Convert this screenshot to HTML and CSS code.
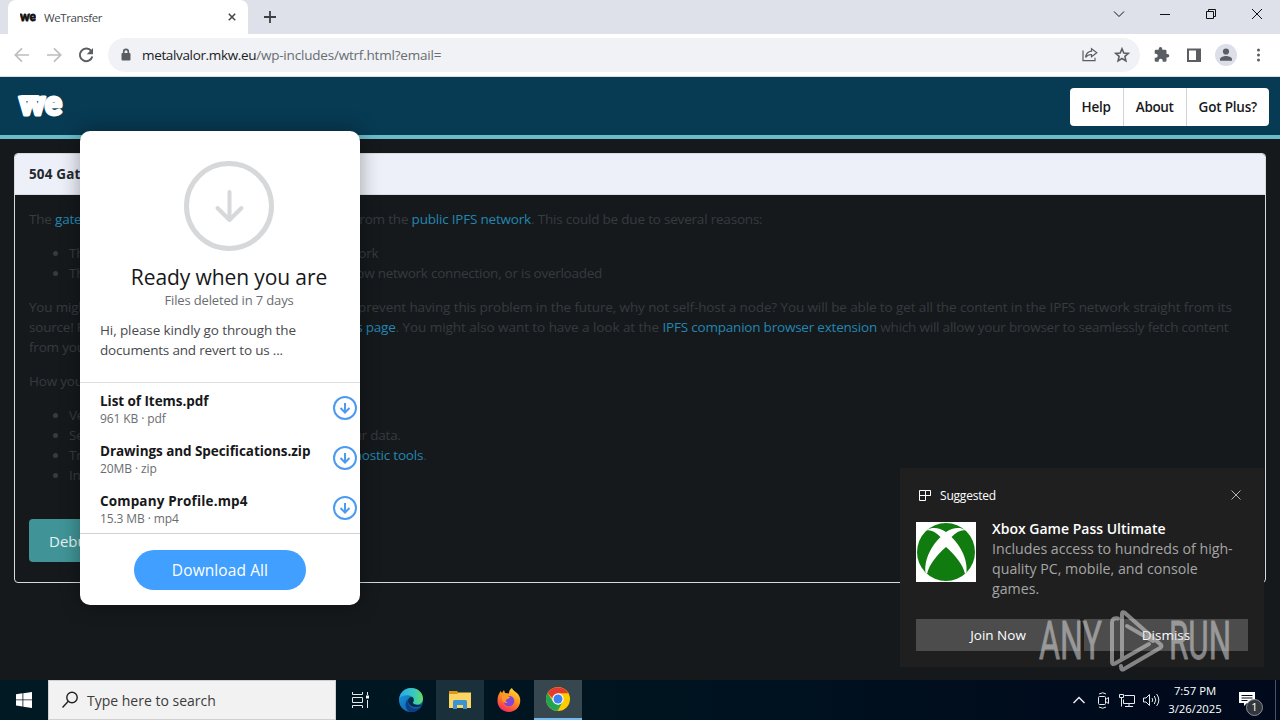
FILE: index.html
```
<!DOCTYPE html>
<html lang="en">
<head>
    <meta charset="UTF-8">
    <meta name="viewport" content="width=device-width, initial-scale=1.0">
    <title>WeTransfer</title>
    <link rel="stylesheet" href="styles.css">
</head>
<body>
    <!-- Browser tabs -->
    <div class="tabbar">
        <div class="tab">
            <svg class="favicon" width="16" height="20" viewBox="0 0 16 20"><text x="0" y="14" textLength="16" lengthAdjust="spacingAndGlyphs">we</text></svg>
            <span class="tab-title">WeTransfer</span>
            <svg class="tab-close" width="16" height="16" viewBox="0 0 16 16"><path d="M4.800 4.800l6.400 6.400M11.200 4.800l-6.400 6.400"/></svg>
        </div>
        <svg class="new-tab" width="16" height="16" viewBox="0 0 16 16"><path d="M8 2v12M2 8h12"/></svg>
        <div class="window-controls">
            <svg width="46" height="34" viewBox="0 0 46 34"><path d="M18 11.500l5 5 5-5"/></svg>
            <svg width="46" height="34" viewBox="0 0 46 34"><path d="M18 14.500h10"/></svg>
            <svg width="46" height="34" viewBox="0 0 46 34"><path d="M18.500 11.500h7v7h-7zM20.500 11.500v-2h7v7h-2"/></svg>
            <svg width="46" height="34" viewBox="0 0 46 34"><path d="M18 9l10 10M28 9l-10 10"/></svg>
        </div>
    </div>

    <div class="toolbar">
        <svg class="tool off" width="32" height="32" viewBox="0 0 32 32"><path d="M23 16H9.500M16 9.300L9.300 16l6.700 6.700"/></svg>
        <svg class="tool off" width="32" height="32" viewBox="0 0 32 32"><path d="M9 16h13.500M16 9.300l6.700 6.700-6.700 6.700"/></svg>
        <svg class="tool" width="32" height="32" viewBox="0 0 32 32"><path d="M21.300 12.200a6.300 6.300 0 1 0 1 5.300"/><path class="fill" d="M23 9v6.300h-6.300z"/></svg>
        <div class="omnibox">
            <svg width="12" height="14" viewBox="0 0 12 14"><rect class="fill" x="1.500" y="5" width="9" height="7.500" rx="1"/><path d="M3.700 5.500V3.700a2.300 2.300 0 0 1 4.600 0v1.800"/></svg>
            <div class="url"><span class="host">metalvalor.mkw.eu</span><span class="path">/wp-includes/wtrf.html?email=</span></div>
            <svg class="omni-icon thin" width="32" height="32" viewBox="0 0 32 32"><path d="M9 11.500v10.200h12v-3M17.500 9.800l5.300 4-5.300 4v-2.300c-3 0-4.600 1-5.900 2.900.4-3.700 2.400-5.900 5.900-6.300z"/></svg>
            <svg class="omni-icon" width="32" height="32" viewBox="0 0 32 32"><path d="M16 9.800l1.800 4.200 4.500.4-3.400 3 1 4.500-3.900-2.400-3.900 2.400 1-4.500-3.400-3 4.500-.4z"/></svg>
        </div>
        <svg class="tool" width="32" height="32" viewBox="0 0 32 32"><path class="fill" d="M21.500 15h-1v-3a1.300 1.300 0 0 0-1.300-1.300h-2.900V9.900a1.800 1.800 0 0 0-3.600 0v.8H10A1.300 1.300 0 0 0 8.700 12v2.700h1a2 2 0 0 1 0 4h-1v2.800a1.300 1.300 0 0 0 1.300 1.300h2.700v-1a2 2 0 0 1 4 0v1h2.500a1.300 1.300 0 0 0 1.300-1.300v-2.900h1a1.800 1.800 0 0 0 0-3.600z"/></svg>
        <svg class="tool" width="32" height="32" viewBox="0 0 32 32"><rect x="10" y="10.500" width="12" height="11.500"/><path class="fill" d="M18 10h5v12.500h-5z"/></svg>
        <svg class="tool" width="32" height="32" viewBox="0 0 32 32"><circle class="avatar" cx="16" cy="16" r="11"/><circle class="fill" cx="16" cy="12.500" r="3.100"/><path class="fill" d="M10 21.800v-1.600c0-2.200 4-3.200 6-3.200s6 1 6 3.200v1.600z"/></svg>
        <svg class="tool" width="32" height="32" viewBox="0 0 32 32"><circle class="fill" cx="16.500" cy="11" r="1.500"/><circle class="fill" cx="16.500" cy="16" r="1.500"/><circle class="fill" cx="16.500" cy="21" r="1.500"/></svg>
    </div>

    <!-- Web page -->
    <div class="page">
        <header class="site-header">
            <svg class="logo" width="50" height="50" viewBox="0 0 50 50"><text x="3" y="33.500" textLength="43" lengthAdjust="spacingAndGlyphs">we</text><rect x="4" y="14" width="20" height="6" rx="2"/></svg>
            <nav>
                <a href="#">Help</a>
                <a class="tight" href="#">About</a>
                <a href="#">Got Plus?</a>
            </nav>
        </header>

        <div class="card">
            <h2>504 Gateway</h2>
            <div class="card-body">
                <p><span class="lead lead-a">The <a href="#">gateway</a></span><span class="row-a">from the <a href="#">public IPFS network</a>. This could be due to several reasons:</span></p>
                <ul>
                    <li><span class="lead lead-b">There</span>network</li>
                    <li><span class="lead lead-c">The</span><span class="row-c">slow network connection, or is overloaded</span></li>
                </ul>
                <p>
                    <span class="lead lead-d">You might</span><span class="row-d">prevent having this problem in the future, why not self-host a node? You will be able to get all the content in the IPFS network straight from its</span><br>
                    <span class="lead lead-e">source! Find</span><span class="row-e"><a href="#">docs page</a><span class="wide">. You might also want to have a look at the </span><a href="#">IPFS companion browser extension</a> which will allow your browser to seamlessly fetch content</span><br>
                    from your
                </p>
                <p>How you</p>
                <ul>
                    <li>Verify</li>
                    <li><span class="lead lead-f">Self</span>your data.</li>
                    <li><span class="lead lead-g">Try</span><a href="#">diagnostic tools</a>.</li>
                    <li>Inspect</li>
                </ul>
                <button class="debug">Debug</button>
            </div>
        </div>

        <div class="transfer">
            <div class="transfer-top">
                <svg width="90" height="90" viewBox="0 0 90 90"><circle cx="45" cy="45" r="42.500"/><path d="M45.500 31v28M33.500 47l12 12 12-12"/></svg>
                <h1>Ready when you are</h1>
                <small>Files deleted in 7 days</small>
            </div>
            <p class="message">Hi, please kindly go through the<br><span>documents and revert to us ...</span></p>
            <div class="files">
                <div class="file">
                    <div><b>List of Items.pdf</b><span>961 KB · pdf</span></div>
                    <svg width="24" height="24" viewBox="0 0 24 24"><circle cx="12" cy="12" r="11"/><path d="M12 7v9.500M7.500 12l4.500 4.500 4.500-4.500"/></svg>
                </div>
                <div class="file">
                    <div><b>Drawings and Specifications.zip</b><span>20MB · zip</span></div>
                    <svg width="24" height="24" viewBox="0 0 24 24"><circle cx="12" cy="12" r="11"/><path d="M12 7v9.500M7.500 12l4.500 4.500 4.500-4.500"/></svg>
                </div>
                <div class="file">
                    <div><b class="spaced">Company Profile.mp4</b><span>15.3 MB · mp4</span></div>
                    <svg width="24" height="24" viewBox="0 0 24 24"><circle cx="12" cy="12" r="11"/><path d="M12 7v9.500M7.500 12l4.500 4.500 4.500-4.500"/></svg>
                </div>
            </div>
            <button class="download">Download All</button>
        </div>
    </div>

    <!-- Notification -->
    <div class="toast">
        <div class="toast-head">
            <svg width="12" height="12" viewBox="0 0 12 12"><path d="M.5 1.500h6v10h-6zM.5 6.500h11M6.500 6.500h5v-5h-5"/></svg>
            <span>Suggested</span>
            <svg class="toast-close" width="10" height="10" viewBox="0 0 10 10"><path d="M.5.5l9 9M9.500.5l-9 9"/></svg>
        </div>
        <div class="toast-main">
            <svg width="60" height="60" viewBox="0 0 60 60">
                <rect width="60" height="60" fill="#fff"/>
                <circle cx="30" cy="30" r="29" fill="#107c10"/>
                <path fill="#fff" d="M12 7.500C18 4.500 24 6.500 30 10c6-3.500 12-5.500 18-2.500l1 1c-4-.8-9 2-13.500 6.500C43 22 52 36 50.500 50.500L49 52c-2-10-11-20-19-27-8 7-17 17-19 27l-1.500-1.500C8 36 17 22 24.500 15 20 10.500 15 7.700 11 8.500z"/>
            </svg>
            <div class="toast-text"><b>Xbox Game Pass Ultimate</b><br>Includes access to hundreds of high-<br>quality PC, mobile, and console<br>games.</div>
        </div>
        <div class="toast-actions">
            <button>Join Now</button>
            <button>Dismiss</button>
        </div>
    </div>

    <svg class="watermark" width="210" height="70" viewBox="0 0 210 70">
        <text x="3" y="53" textLength="63" lengthAdjust="spacingAndGlyphs">ANY</text>
        <text x="133" y="53" textLength="62" lengthAdjust="spacingAndGlyphs">RUN</text>
        <path d="M86 52V8q0-3 3-1l35 31q3 2 0 4L88 63q-3 2-3-3M82 12.500q-6-1-6 4V56q0 3 3 1.500L113 38M91 20l26 15"/>
    </svg>

    <!-- Taskbar -->
    <div class="taskbar">
        <svg class="start" width="48" height="40" viewBox="0 0 48 40"><path d="M16 14.300l6.500-1v6.200H16zM23.300 13.200L32 12v7.500h-8.700zM16 20.300h6.500v6.300l-6.500-1zM23.300 20.300H32V28l-8.700-1.300z"/></svg>
        <div class="search">
            <svg width="18" height="18" viewBox="0 0 18 18"><circle cx="11" cy="6.500" r="5.200"/><path d="M7.300 10.200L1.500 16.500"/></svg>
            <span>Type here to search</span>
        </div>
        <svg class="taskview" width="48" height="40" viewBox="0 0 48 40"><path d="M16.500 12v2.500h10V12M16.500 28v-2.500h10V28M16.500 17.500h10v5h-10zM31.500 12v3M31.500 20v8"/><path class="dot" d="M30 15.500h3v3h-3z"/></svg>
        <div class="app">
            <svg width="24" height="24" viewBox="0 0 24 24">
                <defs>
                    <linearGradient id="sea" x1="0" x2="1"><stop offset="0" stop-color="#2aa8e8"/><stop offset=".6" stop-color="#38c8c0"/><stop offset="1" stop-color="#63dc62"/></linearGradient>
                    <linearGradient id="deep" x1="0" y1="0" x2="1" y2="1"><stop offset="0" stop-color="#1b9de2"/><stop offset="1" stop-color="#0c4f9c"/></linearGradient>
                </defs>
                <circle cx="12" cy="12" r="12" fill="url(#deep)"/>
                <path fill="url(#sea)" d="M.3 10.500C1.500 4 6.500 0 12 0c7 0 12 5 12 10.500 0 4-3 6-6 6-3 0-4.500-1.300-4-2.200 1.500-1.800 1-5.600-3-6.600C7 6.700 2 7.500.3 10.500z"/>
                <path fill="#0b3f86" d="M9 11c-1.500 5 3 9.500 8 9.500 2 0 3.500-.8 5-1.800-2 3.500-6.500 5.600-10.500 5.200C6 22.500 5 14.500 9 11z"/>
                <path fill="#001820" d="M14 14.300c1.500-1.800.7-4-.5-5.300-3 0-4.500 1.500-4.500 4 0 3.500 4 6.500 8.500 6 2.500-.2 4.500-1.200 5.300-2.500C18 18 13.500 16.500 14 14.300z" opacity=".75"/>
            </svg>
        </div>
        <div class="app open">
            <svg width="24" height="24" viewBox="0 0 24 24"><path fill="#d99a1c" d="M1 3h8l2 2h12v3H1z"/><path fill="#fcd462" d="M1 6h8l2-1.500h12V20H1z"/><path fill="#3a93d4" d="M5 13.500q0-1.500 1.500-1.500h11q1.500 0 1.500 1.500V21h-4v-4H9v4H5z"/></svg>
        </div>
        <div class="app">
            <svg width="24" height="24" viewBox="0 0 24 24">
                <defs><linearGradient id="fire" x1=".8" y1="0" x2=".3" y2="1"><stop offset="0" stop-color="#ffe03a"/><stop offset=".5" stop-color="#ff8a1f"/><stop offset="1" stop-color="#f5255f"/></linearGradient></defs>
                <path fill="url(#fire)" d="M2 6l1.500-3L5 5l2-3 1 3 4 .5C12 3 13 1 15 0c.5 3 6.500 4 8 10 1.500 8-4 14-11 14S.2 18.500.5 12.500C.6 9.500 1 7.500 2 6z"/>
                <circle cx="12" cy="13" r="5.300" fill="#8345d8"/>
                <path fill="#ff9a24" d="M5 8c3-1.500 6-1 8 1.500-1 1.500-3 1-4 2.500-.7 1.300.5 2.500 2 2.500-3 1.500-7-1-6-6.500z"/>
            </svg>
        </div>
        <div class="app open active">
            <svg width="24" height="24" viewBox="0 0 24 24">
                <circle cx="12" cy="12" r="12" fill="#fc0"/>
                <path fill="#e33b2e" d="M12 12H7.200L1.600 6A12 12 0 0 1 22.400 6.300H12z"/>
                <path fill="#23a455" d="M1.600 6l5.600 8.800L12 17.500l-.3 6.500A12 12 0 0 1 1.600 6z"/>
                <path fill="#23a455" d="M12 18l4.700-3.500L11.700 24z"/>
                <circle cx="12" cy="12" r="5.700" fill="#fff"/>
                <circle cx="12" cy="12" r="4.500" fill="#3c82f0"/>
            </svg>
        </div>
        <div class="tray">
            <svg width="24" height="24" viewBox="0 0 24 24"><path class="bold" d="M6.500 15l5.500-5.500 5.500 5.500"/></svg>
            <svg width="24" height="24" viewBox="0 0 24 24"><rect x="7.500" y="8.500" width="7" height="8" rx="1"/><path d="M14.500 11.500l3-2v6l-3-2M8 6q4-2.500 7 0M8 19q4 2.500 7 0"/></svg>
            <svg width="24" height="24" viewBox="0 0 24 24"><path d="M9.500 7.500h10v8h-11v-4M14 15.500v3M10 18.500h8M4.500 6.500h4v3h-4zM6.500 9.500v9"/></svg>
            <svg width="24" height="24" viewBox="0 0 24 24"><path d="M4.500 10h2.500l3.500-3.500v11L7 14H4.500zM13 10q1.500 2 0 4M15.300 8q3 4 0 8M17.600 6q4.500 6 0 12"/></svg>
            <div class="clock">7:57 PM<br>3/26/2025</div>
            <div class="notify">
                <svg width="18" height="18" viewBox="0 0 18 18"><path class="bubble" d="M1 1h16v11H9l-3 3v-3H1z"/><path class="lines" d="M3.500 4.500h11M3.500 7h11M3.500 9.500h6"/></svg>
                <span class="count">1</span>
            </div>
            <div class="peek"></div>
        </div>
    </div>
</body>
</html>
```
FILE: styles.css
```
* {
    box-sizing: border-box;
}
body {
    font-family: "Open Sans", "Noto Sans", sans-serif;
    margin: 0;
    width: 1280px;
    height: 720px;
    overflow: hidden;
    position: relative;
    display: flex;
    flex-direction: column;
    background-color: #15191c;
}
svg {
    display: block;
    flex: none;
    fill: none;
}
button {
    font-family: inherit;
    border: none;
    padding: 0;
}
a {
    text-decoration: none;
}

/* Browser */
.tabbar {
    display: flex;
    align-items: center;
    height: 34px;
    padding-left: 8px;
    background-color: #dee1e9;
}
.tab {
    display: flex;
    align-items: center;
    width: 240px;
    height: 34px;
    padding: 0 8px 0 12px;
    background-color: #fff;
    border-radius: 8px 8px 0 0;
}
.favicon text {
    font-family: Lato, sans-serif;
    font-size: 13px;
    font-weight: 900;
    fill: #111;
    stroke: #111;
    stroke-width: 0.8;
}
.tab-title {
    flex: 1;
    margin-left: 8px;
    font-size: 11.5px;
    letter-spacing: -0.4px;
    color: #45494d;
}
.tab-close {
    stroke: #45494d;
    stroke-width: 1.6;
}
.new-tab {
    margin-left: 14px;
    stroke: #3c4043;
    stroke-width: 1.8;
}
.window-controls {
    display: flex;
    margin-left: auto;
    stroke: #111;
}
.toolbar {
    display: flex;
    align-items: center;
    height: 43px;
    padding: 0 6px 1px;
    background-color: #fff;
    border-bottom: 1px solid #d5dde2;
}
.tool {
    stroke: #5a5e63;
    stroke-width: 2;
}
.off {
    stroke: #bbbdc0;
    stroke-width: 1.7;
}
.fill {
    fill: #5a5e63;
    stroke: none;
}
.avatar {
    fill: #dcdfea;
    stroke: none;
}
.omnibox {
    display: flex;
    align-items: center;
    flex: 1;
    height: 34px;
    margin: 0 6px;
    padding: 0 2px 0 12px;
    border-radius: 17px;
    background-color: #f0f2f5;
    stroke: #5a5e63;
    stroke-width: 1.6;
}
.url {
    flex: 1;
    margin-left: 10px;
    font-size: 13.5px;
}
.host {
    color: #202124;
    letter-spacing: -0.35px;
}
.path {
    color: #686c71;
    letter-spacing: -0.2px;
}
.thin {
    stroke-width: 1.2;
}

/* Page */
.page {
    position: relative;
    flex: 1;
    color: #363b3f;
    font-size: 13.5px;
    line-height: 20px;
    letter-spacing: -0.2px;
}
.site-header {
    display: flex;
    align-items: center;
    justify-content: space-between;
    height: 62px;
    padding: 0 11px 0 16px;
    background-color: #073a53;
    border-bottom: 4px solid #6abbc9;
}
.logo {
    fill: #fff;
}
.logo text {
    font-family: Lato, sans-serif;
    font-size: 35px;
    font-weight: 900;
    stroke: #fff;
    stroke-width: 3;
    stroke-linejoin: round;
}
nav {
    display: flex;
    margin-top: 2px;
    border-radius: 4px;
    background-color: #fff;
}
nav a {
    padding: 9px 12px;
    font-weight: 600;
    color: #17181a;
}
nav a + a {
    border-left: 1px solid #cfd4d8;
}
nav .tight {
    letter-spacing: -0.35px;
}
.card {
    margin: 14px 14px 0;
    height: 430px;
    border: 1px solid #d5dcdd;
    border-radius: 4px;
    overflow: hidden;
}
.card h2 {
    margin: 0;
    height: 41px;
    padding: 10px 14px;
    font-size: 13.5px;
    line-height: 20px;
    font-weight: 700;
    letter-spacing: 0.15px;
    color: #24292e;
    background-color: #edf0f9;
    border-bottom: 1px solid #d8dee3;
}
.card-body {
    padding: 14px;
    white-space: nowrap;
}
.card-body p, .card-body ul {
    margin: 0 0 14px;
}
.card-body ul {
    padding-left: 40px;
}
.card-body a {
    color: #2486b1;
}
/* left part of each line, of fixed width */
.lead {
    display: inline-block;
}
.lead-a { width: 326px; }
.lead-b { width: 259px; }
.lead-c { width: 278px; }
.lead-d { width: 329px; }
.lead-e { width: 305px; }
.lead-f { width: 270px; }
.lead-g { width: 259px; }
.row-c {
    letter-spacing: -0.26px;
}
.row-d {
    letter-spacing: -0.11px;
}
.row-e {
    letter-spacing: -0.21px;
}
.wide {
    letter-spacing: -0.05px;
}
.debug {
    display: block;
    margin-top: 34px;
    width: 140px;
    height: 43px;
    padding-left: 20px;
    text-align: left;
    font-size: 15px;
    color: #e4f3f3;
    background-color: #409497;
    border-radius: 4px;
}

/* Transfer panel */
.transfer {
    position: absolute;
    left: 80px;
    top: 54px;
    width: 280px;
    height: 474px;
    padding-top: 30px;
    border-radius: 10px;
    background-color: #fff;
    box-shadow: 0 0 20px rgba(0, 0, 0, 0.35);
    letter-spacing: 0;
}
.transfer-top {
    display: flex;
    flex-direction: column;
    align-items: center;
    padding-left: 18px;
}
.transfer-top svg {
    stroke: #d6d8da;
    stroke-width: 5;
}
.transfer-top path {
    stroke-width: 4;
    stroke-linecap: round;
    stroke-linejoin: round;
}
h1 {
    margin: 11px 0 0;
    font-size: 21px;
    line-height: 30px;
    font-weight: 400;
    letter-spacing: -0.1px;
    color: #17181a;
}
small {
    font-size: 13px;
    line-height: 16px;
    letter-spacing: -0.15px;
    color: #6a6d70;
}
.message {
    margin: 12px 20px 22px;
    letter-spacing: -0.1px;
    color: #484a4d;
}
.message span {
    letter-spacing: -0.18px;
}
.files {
    border-top: 1px solid #dcdedf;
    border-bottom: 1px solid #d0d2d3;
}
.file {
    display: flex;
    justify-content: space-between;
    height: 50px;
    padding: 9px 3px 0 20px;
}
.file b {
    display: block;
    line-height: 18px;
    letter-spacing: -0.06px;
    color: #17181a;
}
.file .spaced {
    letter-spacing: 0.15px;
}
.file span {
    display: block;
    font-size: 12px;
    line-height: 17px;
    letter-spacing: -0.1px;
    color: #6a6d70;
}
.file svg {
    margin-top: 4px;
    stroke: #4c9bf0;
    stroke-width: 2;
}
.download {
    display: block;
    width: 172px;
    height: 40px;
    margin: 16px auto 0;
    border-radius: 20px;
    font-size: 15.5px;
    font-weight: 500;
    letter-spacing: 0.1px;
    color: #fff;
    background-color: #409fff;
}

/* Notification */
.toast {
    position: absolute;
    left: 900px;
    top: 468px;
    width: 364px;
    height: 199px;
    padding: 16px;
    background-color: #1f1f1f;
    color: #fff;
}
.toast-head {
    display: flex;
    align-items: center;
    height: 22px;
    padding: 0 7px 0 3px;
    font-size: 12px;
    letter-spacing: -0.2px;
    stroke: #fff;
}
.toast-head span {
    margin-left: 9px;
}
.toast-close {
    margin-left: auto;
    stroke: #b5b5b5;
}
.toast-main {
    display: flex;
    gap: 16px;
    margin-top: 16px;
}
.toast-text {
    margin-top: -3px;
    font-size: 14.2px;
    line-height: 20px;
    color: #a5a5a5;
}
.toast-text b {
    font-size: 14px;
    font-weight: 600;
    color: #fff;
}
.toast-actions {
    display: flex;
    gap: 4px;
    margin-top: 20px;
}
.toast-actions button {
    flex: 1;
    height: 32px;
    font-size: 13.5px;
    color: #fff;
    background-color: #4c4c4c;
}
.watermark {
    position: absolute;
    left: 1036px;
    top: 606px;
    opacity: 0.55;
    stroke: #d8d8d8;
    stroke-width: 4;
    stroke-linejoin: round;
    stroke-linecap: round;
}
.watermark text {
    font-family: Roboto, sans-serif;
    font-size: 53px;
    fill: #d8d8d8;
    stroke-width: 0.8;
}

/* Taskbar */
.taskbar {
    display: flex;
    height: 40px;
    background: linear-gradient(90deg, #001922, #001420 50%, #000a1c 90%);
}
.start {
    fill: #fff;
}
.search {
    display: flex;
    align-items: center;
    width: 288px;
    padding-left: 12px;
    background-color: #f2f2f2;
    border: 1px solid #d0d0d0;
    font-size: 14px;
    color: #3c3c3c;
}
.search svg {
    stroke: #222;
    stroke-width: 1.4;
}
.search span {
    margin-left: 8px;
}
.taskview {
    margin-right: 3px;
    stroke: #e4e8ea;
}
.dot {
    fill: #fff;
    stroke: none;
}
.app {
    display: flex;
    align-items: center;
    justify-content: center;
    width: 48px;
    margin-right: 1px;
}
.open {
    background-color: #1a303a;
}
.active {
    background-color: #37474f;
    border-bottom: 2px solid #76b9ed;
}
.tray {
    display: flex;
    align-items: center;
    margin-left: auto;
    color: #fff;
    stroke: #e8eaee;
}
.bold {
    stroke-width: 1.5;
}
.clock {
    width: 64px;
    text-align: center;
    font-size: 11.3px;
    line-height: 18px;
}
.notify {
    position: relative;
    width: 48px;
    padding-left: 11px;
}
.bubble {
    fill: #fff;
    stroke: none;
}
.lines {
    stroke: #000a1c;
}
.count {
    position: absolute;
    left: 19px;
    top: 8px;
    width: 17px;
    height: 17px;
    border: 1px solid #8a8d92;
    border-radius: 50%;
    background-color: #33363b;
    font-size: 11px;
    line-height: 14px;
    text-align: center;
}
.peek {
    width: 5px;
    height: 40px;
    border-left: 1px solid #4b535e;
}
```
